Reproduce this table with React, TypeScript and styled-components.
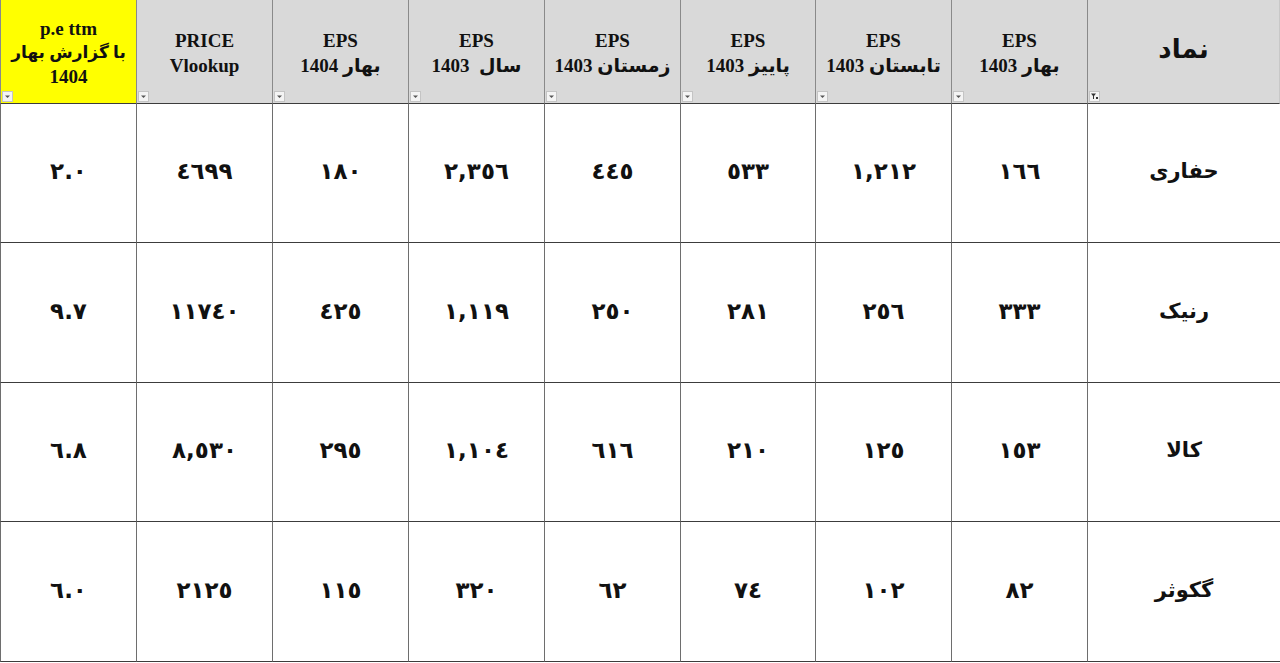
import styled, { createGlobalStyle } from 'styled-components';

const GlobalStyle = createGlobalStyle`
  html, body {
    margin: 0;
    padding: 0;
    background: #ffffff;
  }
  body {
    font-family: "Liberation Serif", "DejaVu Sans", serif;
  }
`;

interface IRow {
  symbol: string,
  values: string[]
}

// columns in right-to-left order, the sheet is rtl
const headers = [
  { top: 'EPS', bottom: 'بهار 1403' },
  { top: 'EPS', bottom: 'تابستان 1403' },
  { top: 'EPS', bottom: 'پاییز 1403' },
  { top: 'EPS', bottom: 'زمستان 1403' },
  { top: 'EPS', bottom: 'سال  1403' },
  { top: 'EPS', bottom: 'بهار 1404' },
  { top: 'PRICE', bottom: 'Vlookup' },
];

const rows: IRow[] = [
  { symbol: 'حفاری', values: ['١٦٦', '١,٢١٢', '٥٣٣', '٤٤٥', '٢,٣٥٦', '١٨٠', '٤٦٩٩', '٢.٠'] },
  { symbol: 'رنیک', values: ['٣٣٣', '٢٥٦', '٢٨١', '٢٥٠', '١,١١٩', '٤٢٥', '١١٧٤٠', '٩.٧'] },
  { symbol: 'کالا', values: ['١٥٣', '١٢٥', '٢١٠', '٦١٦', '١,١٠٤', '٢٩٥', '٨,٥٣٠', '٦.٨'] },
  { symbol: 'گکوثر', values: ['٨٢', '١٠٢', '٧٤', '٦٢', '٣٢٠', '١١٥', '٢١٢٥', '٦.٠'] },
];

const Sheet = styled.div`
  direction: rtl;
  width: 1280px;
  height: 663px;
  display: grid;
  grid-template-columns: 193px repeat(2, 136px) 135px repeat(5, 136px);
  grid-template-rows: 104px 139px 140px 139px 140px;
  box-sizing: border-box;
  overflow: hidden;
`;

const HeadCell = styled.div<{ $yellow?: boolean }>`
  position: relative;
  box-sizing: border-box;
  background: ${(p) => (p.$yellow ? '#ffff00' : '#d9d9d9')};
  border-left: 1px solid #8a8a8a;
  border-bottom: 1px solid #3c3c3c;
  display: flex;
  flex-direction: column;
  align-items: center;
  justify-content: center;
  font-weight: bold;
  font-size: 19px;
  line-height: ${(p) => (p.$yellow ? '24px' : '25px')};
  color: #111;
  padding-top: 2px;
  &:first-child {
    border-right: 1px solid #c8c8c8;
  }
  &:last-child {
    border-left: 1px solid #c8c8c8;
  }
`;

const SymbolHead = styled.span`
  font-family: "DejaVu Sans", sans-serif;
  font-size: 26px;
  font-weight: bold;
  margin-bottom: 6px;
`;

const Line = styled.span<{ $small?: boolean }>`
  display: block;
  white-space: pre;
  unicode-bidi: plaintext;
  font-size: ${(p) => (p.$small ? '17px' : 'inherit')};
`;

const FilterBtn = styled.span`
  position: absolute;
  left: 1px;
  bottom: 1px;
  width: 9px;
  height: 9px;
  background: #f4f4f4;
  border: 1px solid #c4c4c4;
  display: flex;
  align-items: center;
  justify-content: center;
  svg {
    display: block;
  }
`;

const Cell = styled.div<{ $symbol?: boolean }>`
  box-sizing: border-box;
  border-left: 1px solid #6e6e6e;
  border-bottom: 1px solid #3c3c3c;
  display: flex;
  align-items: center;
  justify-content: center;
  font-family: "DejaVu Sans", sans-serif;
  font-weight: bold;
  font-size: ${(p) => (p.$symbol ? '21px' : '23px')};
  color: #111;
  padding-bottom: 4px;
  &:first-child {
    border-right: 1px solid #c8c8c8;
  }
`;

const Num = styled.span`
  direction: ltr;
  unicode-bidi: isolate;
`;

function Filter({ active }: { active?: boolean }) {
  return (
    <FilterBtn>
      {active ? (
        <svg width="7" height="7" viewBox="0 0 7 7">
          <path d="M0 0.5 H5 L3 3 V6 H2 V3 Z" fill="#333" />
          <rect x="5" y="4" width="2" height="2" fill="#333" />
        </svg>
      ) : (
        <svg width="7" height="7" viewBox="0 0 7 7">
          <path d="M1 2.5 H6 L3.5 5 Z" fill="#555" />
        </svg>
      )}
    </FilterBtn>
  );
}

export default function App() {
  return (
    <>
      <GlobalStyle />
      <Sheet>
        <HeadCell>
          <SymbolHead>نماد</SymbolHead>
          <Filter active />
        </HeadCell>
        {headers.map((h, i) => (
          <HeadCell key={i}>
            <Line>{h.top}</Line>
            <Line dir="rtl">{h.bottom}</Line>
            <Filter />
          </HeadCell>
        ))}
        <HeadCell $yellow>
          <Line>p.e ttm</Line>
          <Line dir="rtl" $small>با گزارش بهار</Line>
          <Line>1404</Line>
          <Filter />
        </HeadCell>

        {rows.map((r) => (
          <>
            <Cell $symbol key={r.symbol}>{r.symbol}</Cell>
            {r.values.map((v, j) => (
              <Cell key={r.symbol + j}>
                <Num>{v}</Num>
              </Cell>
            ))}
          </>
        ))}
      </Sheet>
    </>
  );
}
